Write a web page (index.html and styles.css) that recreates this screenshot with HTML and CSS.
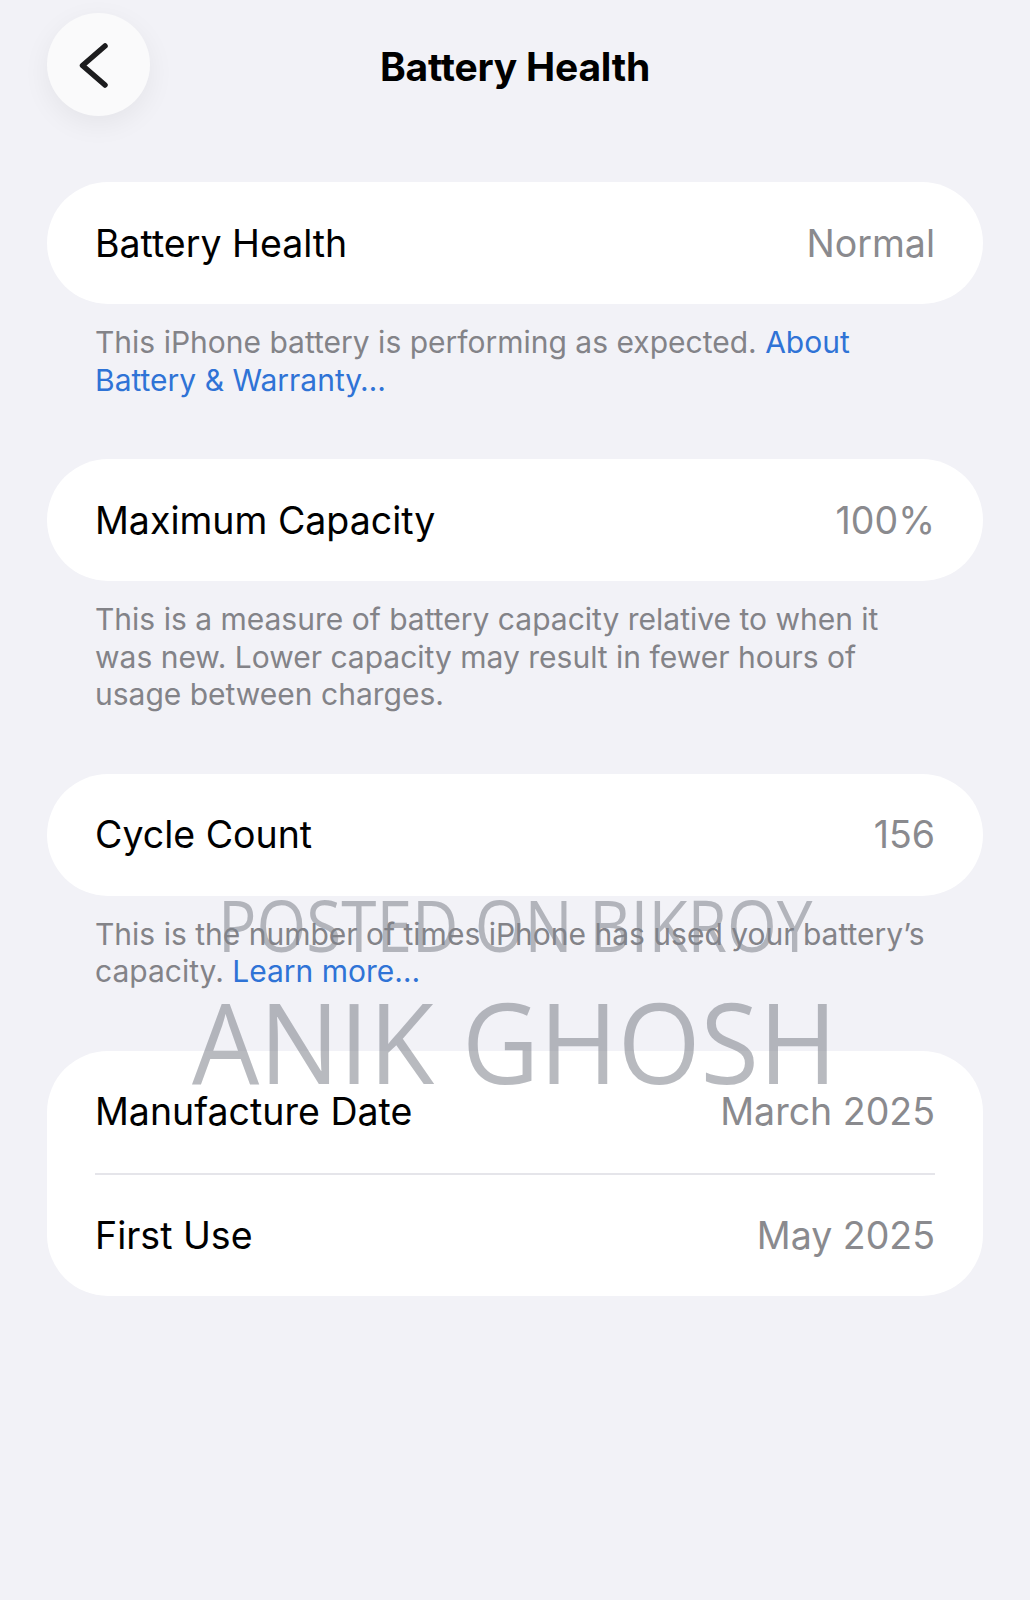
FILE: index.html
```html
<!DOCTYPE html>
<html lang="en">
<head>
  <meta charset="UTF-8">
  <title>Battery Health</title>
  <link rel="stylesheet" href="styles.css">
</head>
<body>

  <div class="screen">
    <header class="nav">
      <button class="back" aria-label="Back">
        <svg viewBox="0 0 103 103" width="103" height="103">
          <path d="M58 33 L35.5 52.5 L58 72" />
        </svg>
      </button>
      <h1>Battery Health</h1>
    </header>

    <main class="groups">
      <section class="group">
        <div class="card">
          <div class="row"><span class="label">Battery Health</span><span class="value">Normal</span></div>
        </div>
        <p class="note">This iPhone battery is performing as expected. <a href="#">About Battery &amp; Warranty…</a></p>
      </section>

      <section class="group">
        <div class="card">
          <div class="row"><span class="label">Maximum Capacity</span><span class="value">100%</span></div>
        </div>
        <p class="note">This is a measure of battery capacity relative to when it was new. Lower capacity may result in fewer hours of usage between charges.</p>
      </section>

      <section class="group">
        <div class="card">
          <div class="row"><span class="label">Cycle Count</span><span class="value">156</span></div>
        </div>
        <p class="note">This is the number of times iPhone has used your battery’s capacity. <a href="#">Learn more…</a></p>
      </section>

      <section class="group">
        <div class="card">
          <div class="row"><span class="label">Manufacture Date</span><span class="value">March 2025</span></div>
          <div class="row"><span class="label">First Use</span><span class="value">May 2025</span></div>
        </div>
      </section>
    </main>

    <!-- seller stamp laid over the screenshot -->
    <div class="watermark">
      <span class="wm-top">POSTED ON BIKROY</span>
      <span class="wm-name">ANIK GHOSH</span>
    </div>
  </div>

</body>
</html>
```

FILE: styles.css
```css
body {
  margin: 0;
  background: #f2f2f7;
  font-family: Inter, 'Noto Sans', sans-serif;
  color: #000;
}
.screen {
  position: relative;
  width: 1030px;
  min-height: 1600px;
}

/* nav bar */
.nav {
  display: grid;
  grid-template-columns: 1fr auto 1fr;
  align-items: center;
  padding: 13px 47px 0;
}
.back {
  width: 103px;
  height: 103px;
  padding: 0;
  border: none;
  border-radius: 50%;
  background: #fafafb;
  box-shadow: 0 8px 28px rgba(0, 0, 0, 0.06);
}
.back svg {
  display: block;
}
.back path {
  fill: none;
  stroke: #1c1c1e;
  stroke-width: 5.5;
  stroke-linecap: round;
  stroke-linejoin: round;
}
.nav h1 {
  margin: 0;
  padding-top: 3px;
  font-size: 39px;
  font-weight: 700;
  letter-spacing: -0.2px;
}

/* grouped list */
.groups {
  padding: 66px 47px 0;
}
.group + .group {
  margin-top: 60px;
}
.card {
  background: #fff;
  border-radius: 61px;
}
.row {
  display: flex;
  justify-content: space-between;
  align-items: center;
  height: 122px;
  margin: 0 48px;
  font-size: 37.5px;
}
.row + .row {
  border-top: 2px solid #e5e5ea;
  height: 121px;
}
.value {
  color: #8a8a8e;
}
.note {
  margin: 0;
  padding: 20px 48px 0;
  font-size: 30px;
  line-height: 37.5px;
  color: #838388;
}
.note a {
  color: #2f73d6;
  text-decoration: none;
}

/* watermark */
.watermark {
  position: absolute;
  left: 0;
  right: 0;
  top: 889px;
  display: flex;
  flex-direction: column;
  align-items: center;
  font-family: 'Open Sans', sans-serif;
  line-height: 1;
  color: rgba(125, 130, 138, 0.55);
  pointer-events: none;
}
.wm-top {
  font-size: 71px;
  transform: scaleX(0.9);
}
.wm-name {
  margin-top: 25px;
  font-size: 112px;
  transform: scaleX(0.95);
}
```
